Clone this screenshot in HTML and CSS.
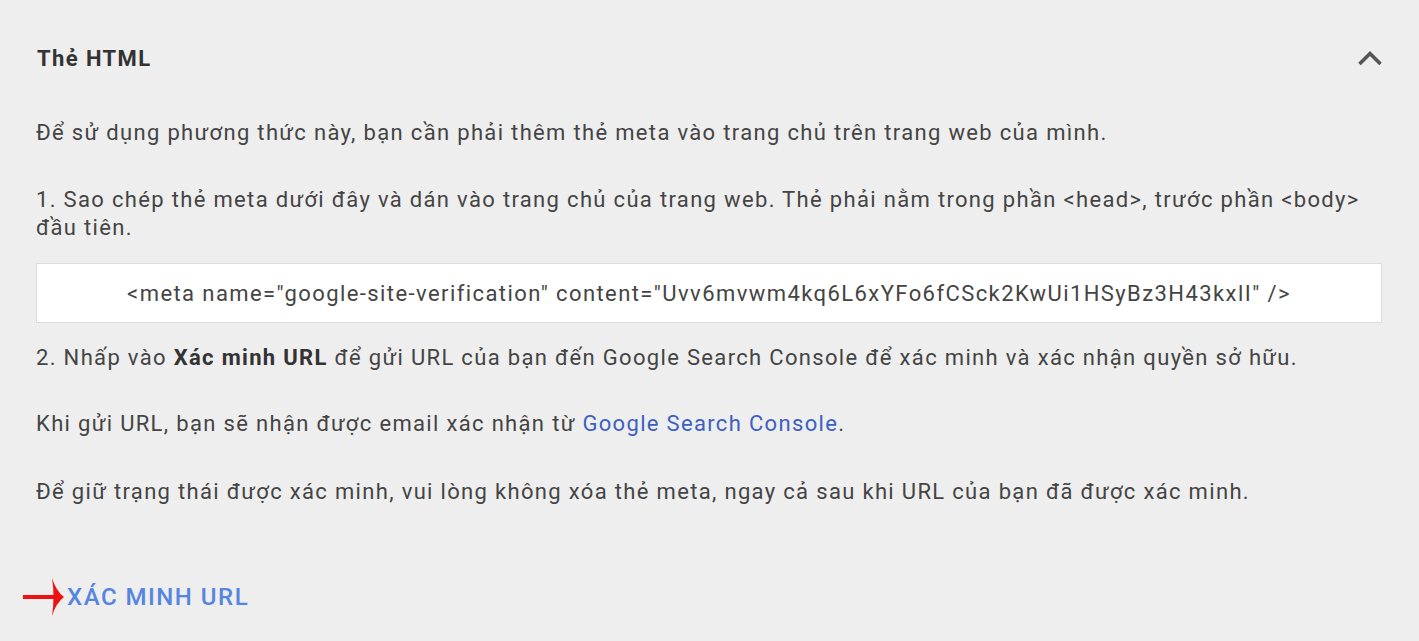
FILE: index.html
```html
<!DOCTYPE html>
<html lang="vi">
<head>
<meta charset="utf-8">
<link rel="stylesheet" href="styles.css">
</head>
<body>
<section class="panel">
  <header class="panel-head">
    <h2 class="panel-title">Thẻ HTML</h2>
    <svg class="chevron" width="26" height="16" viewBox="0 0 26 16"><path d="M2.5 14L13 3.5 23.5 14" fill="none" stroke="#555" stroke-width="3.6"/></svg>
  </header>
  <div class="panel-body">
    <p class="para p-intro">Để sử dụng phương thức này, bạn cần phải thêm thẻ meta vào trang chủ trên trang web của mình.</p>
    <p class="para p-step1">1. Sao chép thẻ meta dưới đây và dán vào trang chủ của trang web. Thẻ phải nằm trong phần &lt;head&gt;, trước phần &lt;body&gt; đầu tiên.</p>
    <div class="code-box">&lt;meta name="google-site-verification" content="Uvv6mvwm4kq6L6xYFo6fCSck2KwUi1HSyBz3H43kxlI" /&gt;</div>
    <p class="para p-step2">2. Nhấp vào <b>Xác minh URL</b> để gửi URL của bạn đến Google Search Console để xác minh và xác nhận quyền sở hữu.</p>
    <p class="para p-email">Khi gửi URL, bạn sẽ nhận được email xác nhận từ <a class="link" href="#">Google Search Console</a>.</p>
    <p class="para p-keep">Để giữ trạng thái được xác minh, vui lòng không xóa thẻ meta, ngay cả sau khi URL của bạn đã được xác minh.</p>
  </div>
  <div class="panel-actions">
    <svg class="arrow" width="44" height="40" viewBox="0 0 44 40"><path d="M1 18h36v4H1z" fill="#ee1111"/><path d="M30 1Q34 14 42 20Q34 26 30 39Q33 20 30 1Z" fill="#ee1111"/></svg>
    <a class="verify-btn" href="#">XÁC MINH URL</a>
  </div>
</section>
</body>
</html>
```

FILE: styles.css
```css
html, body {
  margin: 0;
  padding: 0;
  background: #eeeeee;
}
body {
  font-family: Roboto, "Noto Sans", Arial, sans-serif;
  color: #3c3c3c;
  width: 1419px;
  height: 641px;
  overflow: hidden;
}
.panel {
  padding: 40px 37px 0 36px;
}
.panel-head {
  display: flex;
  align-items: center;
  justify-content: space-between;
  height: 36px;
}
.panel-title {
  margin: 0 0 0 1px;
  font-size: 22px;
  font-weight: 700;
  letter-spacing: 1.4px;
  color: #333;
}
.chevron {
  display: block;
  margin-right: -1px;
}
.panel-body {
  margin-top: 43px;
}
.para {
  margin: 0;
  font-size: 22px;
  letter-spacing: 1.33px;
  line-height: 28px;
  color: #444;
}
.p-step1 {
  margin-top: 39px;
}
.code-box {
  margin-top: 21px;
  height: 58px;
  background: #fff;
  border: 1px solid #dcdcdc;
  display: flex;
  align-items: center;
  justify-content: center;
  font-size: 22px;
  letter-spacing: 1.42px;
  color: #444;
}
.p-step2 {
  margin-top: 21px;
}
.p-step2 b {
  font-weight: 700;
  color: #333;
}
.p-email {
  margin-top: 38px;
}
.p-keep {
  margin-top: 40px;
}
.link {
  color: #3d5fc1;
  text-decoration: none;
}
.panel-actions {
  display: flex;
  align-items: center;
  margin-top: 71px;
  margin-left: -14px;
}
.arrow {
  display: block;
}
.verify-btn {
  margin-left: 1px;
  font-size: 24px;
  font-weight: 500;
  color: #5585e0;
  text-decoration: none;
  letter-spacing: 1.5px;
}
```
